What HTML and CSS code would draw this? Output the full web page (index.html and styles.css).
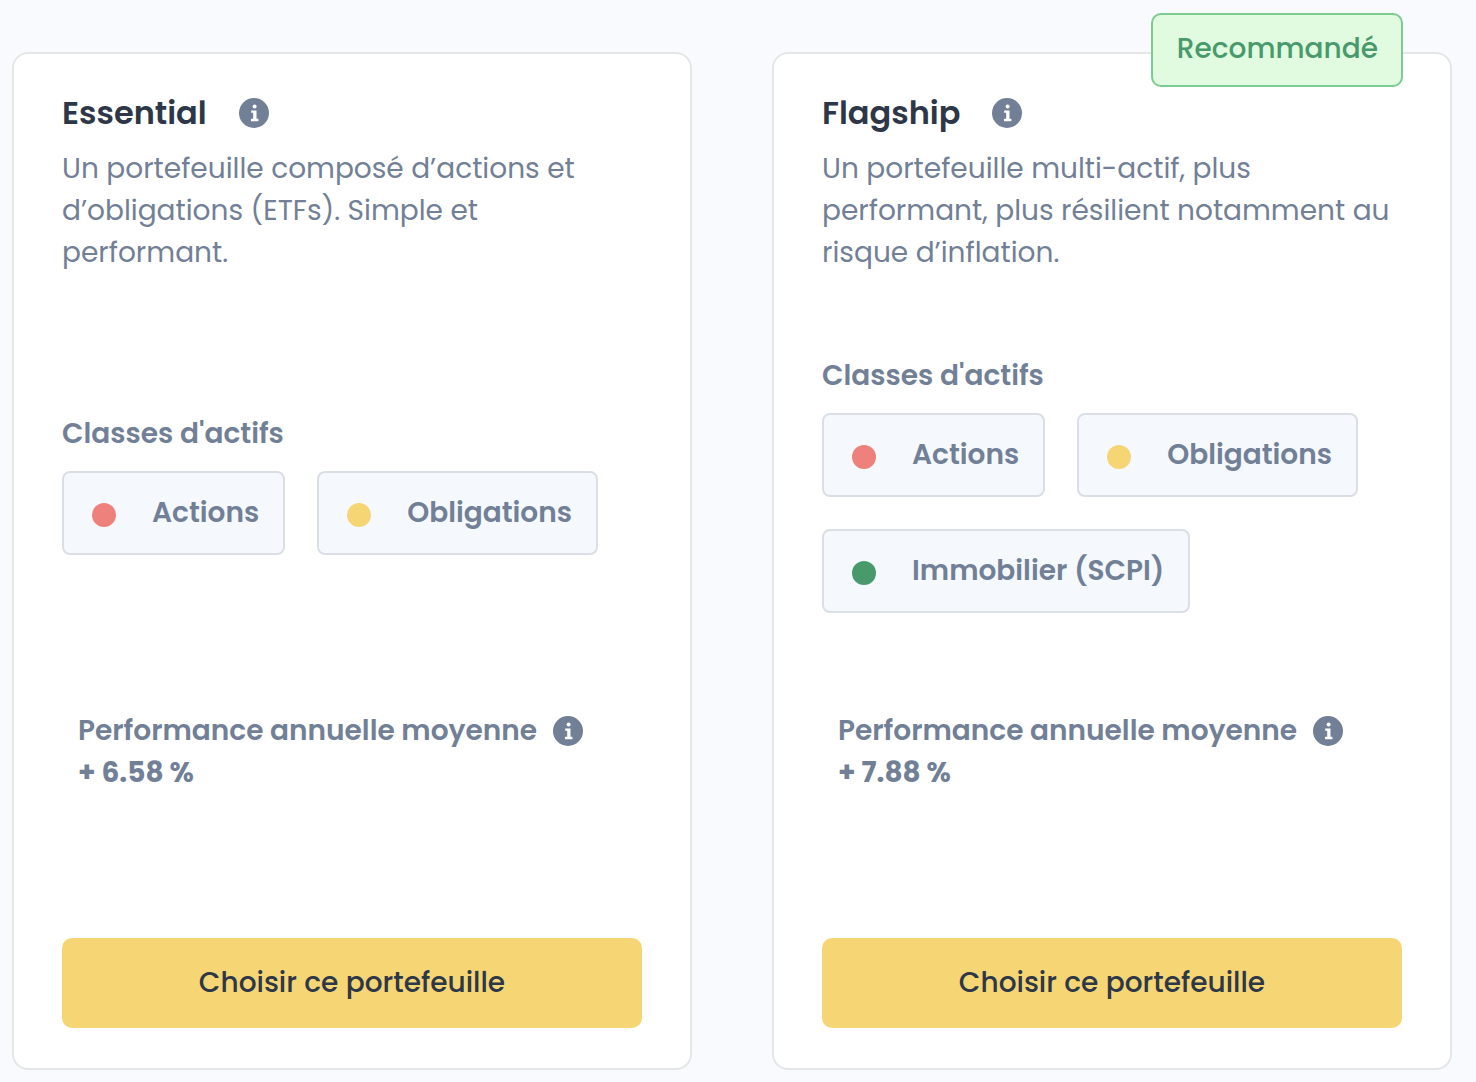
FILE: index.html
```html
<!DOCTYPE html>
<html lang="fr">
<head>
<meta charset="utf-8">
<meta name="viewport" content="width=device-width, initial-scale=1">
<title>Choix du portefeuille</title>
<link rel="stylesheet" href="styles.css">
</head>
<body>
<svg class="sprite" aria-hidden="true">
  <symbol id="info" viewBox="0 0 30 30">
    <circle cx="15" cy="15" r="15" fill="currentColor"/>
    <circle cx="15.6" cy="8.5" r="2" fill="#fff"/>
    <path d="M12.2 12.4h5.3v8.4h1.9v2.4h-7.4v-2.4h2.2v-6h-2z" fill="#fff"/>
  </symbol>
</svg>
<main class="plans">
  <article class="card">
    <header class="card-head">
      <h2 class="card-title">Essential</h2>
      <button class="info" type="button" aria-label="En savoir plus sur Essential"><svg class="info-icon"><use href="#info"/></svg></button>
    </header>
    <p class="description">Un portefeuille composé d’actions et d’obligations (ETFs). Simple et performant.</p>
    <section class="assets">
      <h3 class="label">Classes d'actifs</h3>
      <ul class="tags">
        <li class="tag"><span class="dot dot-red"></span>Actions</li>
        <li class="tag"><span class="dot dot-yellow"></span>Obligations</li>
      </ul>
    </section>
    <section class="performance">
      <div class="performance-head">
        <h3 class="label">Performance annuelle moyenne</h3>
        <button class="info" type="button" aria-label="En savoir plus sur la performance"><svg class="info-icon"><use href="#info"/></svg></button>
      </div>
      <p class="performance-value">+ 6.58 %</p>
    </section>
    <button class="choose" type="button">Choisir ce portefeuille</button>
  </article>
  <article class="card">
    <span class="badge">Recommandé</span>
    <header class="card-head">
      <h2 class="card-title">Flagship</h2>
      <button class="info" type="button" aria-label="En savoir plus sur Flagship"><svg class="info-icon"><use href="#info"/></svg></button>
    </header>
    <p class="description">Un portefeuille multi-actif, plus performant, plus résilient notamment au risque d’inflation.</p>
    <section class="assets">
      <h3 class="label">Classes d'actifs</h3>
      <ul class="tags">
        <li class="tag"><span class="dot dot-red"></span>Actions</li>
        <li class="tag"><span class="dot dot-yellow"></span>Obligations</li>
        <li class="tag"><span class="dot dot-green"></span>Immobilier (SCPI)</li>
      </ul>
    </section>
    <section class="performance">
      <div class="performance-head">
        <h3 class="label">Performance annuelle moyenne</h3>
        <button class="info" type="button" aria-label="En savoir plus sur la performance"><svg class="info-icon"><use href="#info"/></svg></button>
      </div>
      <p class="performance-value">+ 7.88 %</p>
    </section>
    <button class="choose" type="button">Choisir ce portefeuille</button>
  </article>
</main>
</body>
</html>
```
FILE: styles.css
```css
* { box-sizing: border-box; margin: 0; padding: 0; }

body {
  background: #f9fafd;
  color: #718096;
  font: 400 28px/42px Poppins, Inter, sans-serif;
}

button { border: 0; font: inherit; cursor: pointer; }

.sprite { position: absolute; width: 0; height: 0; }

.plans {
  display: grid;
  grid-template-columns: 1fr 1fr;
  gap: 80px;
  padding: 52px 24px 12px 12px;
}

.card {
  position: relative;
  display: flex;
  flex-direction: column;
  padding: 38px 48px 40px;
  background: #fff;
  border: 2px solid #e4e6e8;
  border-radius: 16px;
}

.card-head {
  display: flex;
  align-items: center;
  gap: 32px;
  margin-bottom: 14px;
}

.card-title {
  color: #2d3748;
  font-size: 32px;
  font-weight: 600;
}

.info {
  display: block;
  width: 30px;
  height: 30px;
  flex: none;
  background: none;
  border-radius: 50%;
  color: #718096;
}

.info-icon { display: block; width: 30px; height: 30px; }

.label { font-size: 28px; font-weight: 600; }

.assets {
  display: flex;
  flex: 1;
  flex-direction: column;
  justify-content: center;
  gap: 16px;
  min-height: 420px;
}

.tags {
  display: flex;
  flex-wrap: wrap;
  gap: 32px;
  list-style: none;
}

.tag {
  display: flex;
  align-items: center;
  gap: 36px;
  padding: 19px 24px 19px 28px;
  background: #f5f9fe;
  border: 2px solid #dadfe5;
  border-radius: 8px;
  font-weight: 600;
}

.dot {
  width: 24px;
  height: 24px;
  margin-top: 4px;
  border-radius: 50%;
}

.dot-red { background: #ef817c; }
.dot-yellow { background: #f5d574; }
.dot-green { background: #489a6c; }

.performance { padding: 16px 16px 144px; }

.performance-head { display: flex; align-items: center; gap: 16px; }

.performance-value { font-weight: 700; }

.choose {
  padding: 24px;
  background: #f5d574;
  border-radius: 10px;
  color: #2d3748;
  font-weight: 500;
}

.badge {
  position: absolute;
  top: -41px;
  right: 47px;
  padding: 13px 23px 15px 24px;
  background: #e0fbdf;
  border: 2px solid #7bcb93;
  border-radius: 10px;
  color: #489a6c;
  font-weight: 500;
}
```
